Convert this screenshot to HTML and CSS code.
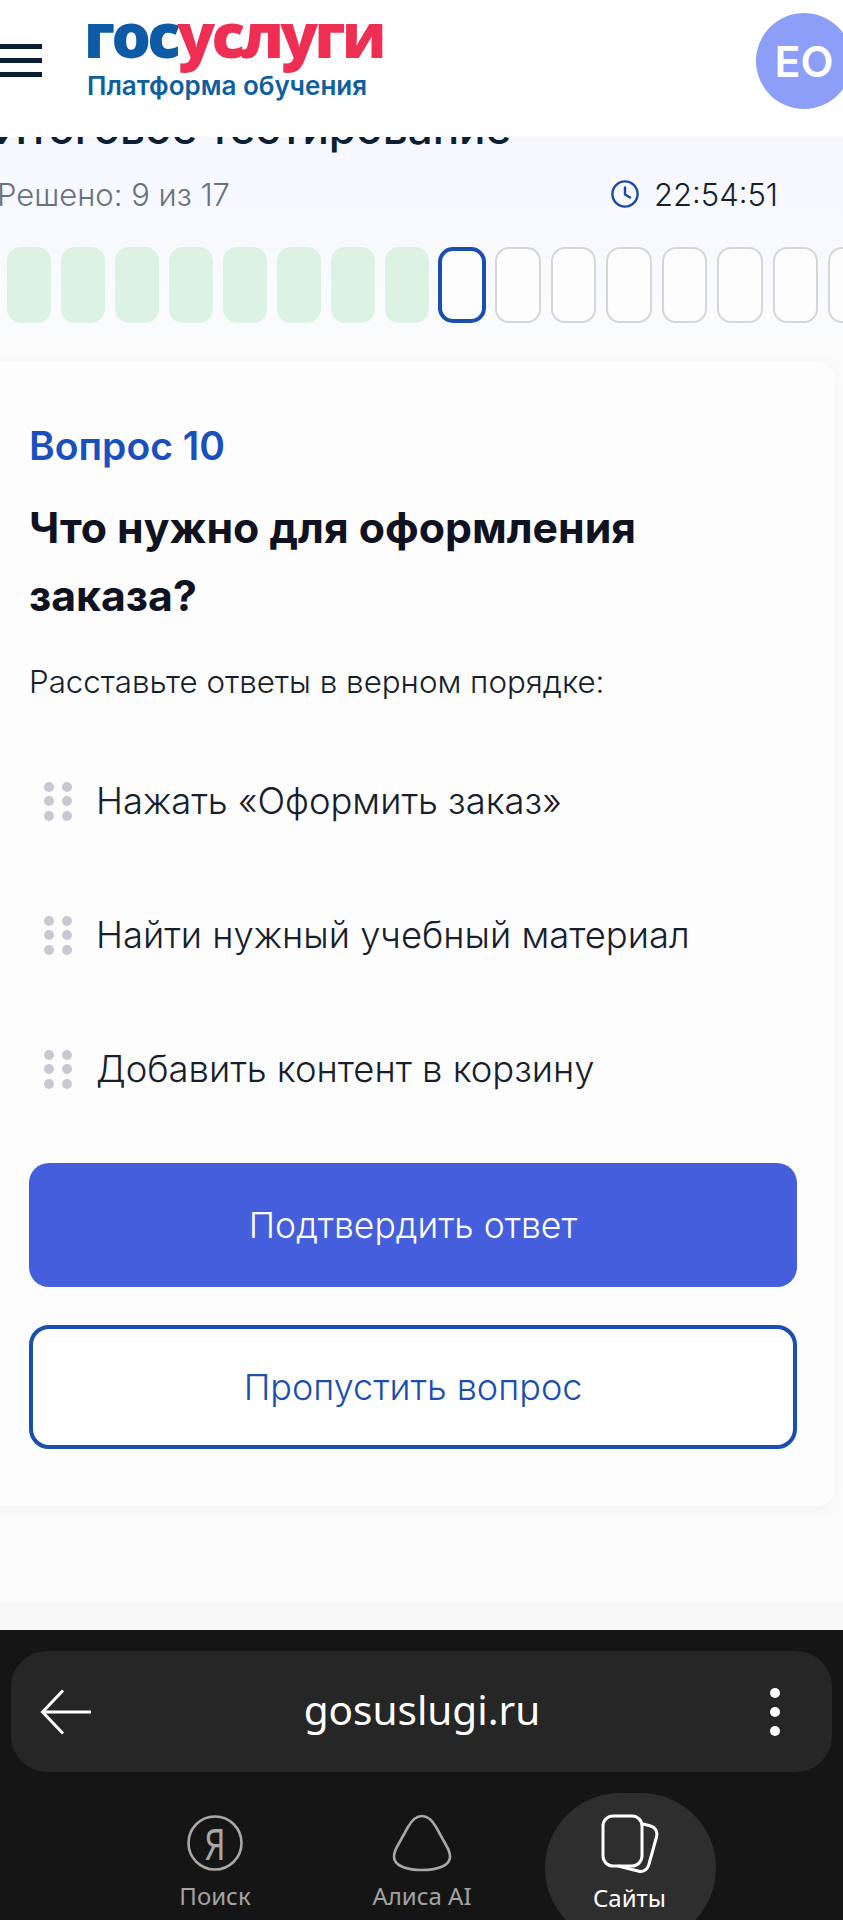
FILE: index.html
```html
<!DOCTYPE html>
<html lang="ru">
<head>
  <meta charset="UTF-8" />
  <title>Итоговое тестирование</title>
  <link rel="stylesheet" href="styles.css">
</head>
<body>

  <div class="page">
    <header class="header">
      <div class="burger"><span></span><span></span><span></span></div>
      <div class="logo">
        <div class="logo-name"><span class="logo-blue">гос</span><span class="logo-red">услуги</span></div>
        <div class="logo-sub">Платформа обучения</div>
      </div>
      <div class="avatar">ЕО</div>
    </header>

    <main class="content">
      <div class="test-title">Итоговое тестирование</div>

      <div class="status">
        <div class="solved">Решено: 9 из 17</div>
        <div class="timer">
          <svg width="30" height="30" viewBox="0 0 30 30" fill="none" stroke="#1a4ba8" stroke-width="2.4">
            <circle cx="15" cy="15" r="12.6"/>
            <path d="M15 8.5v7l5 3" stroke-linecap="round" stroke-linejoin="round"/>
          </svg>
          <span>22:54:51</span>
        </div>
      </div>

      <div class="steps">
        <span class="step done"></span>
        <span class="step done"></span>
        <span class="step done"></span>
        <span class="step done"></span>
        <span class="step done"></span>
        <span class="step done"></span>
        <span class="step done"></span>
        <span class="step done"></span>
        <span class="step current"></span>
        <span class="step"></span>
        <span class="step"></span>
        <span class="step"></span>
        <span class="step"></span>
        <span class="step"></span>
        <span class="step"></span>
        <span class="step"></span>
        <span class="step"></span>
      </div>

      <section class="card">
        <div class="question-num">Вопрос 10</div>
        <h2 class="question">Что нужно для оформления заказа?</h2>
        <p class="hint">Расставьте ответы в верном порядке:</p>

        <ul class="answers">
          <li class="answer">
            <span class="grip"><i></i><i></i><i></i><i></i><i></i><i></i></span>
            Нажать «Оформить заказ»
          </li>
          <li class="answer">
            <span class="grip"><i></i><i></i><i></i><i></i><i></i><i></i></span>
            Найти нужный учебный материал
          </li>
          <li class="answer">
            <span class="grip"><i></i><i></i><i></i><i></i><i></i><i></i></span>
            Добавить контент в корзину
          </li>
        </ul>

        <button class="btn btn-primary">Подтвердить ответ</button>
        <button class="btn btn-outline">Пропустить вопрос</button>
      </section>
    </main>

    <div class="page-end"></div>
  </div>

  <div class="browser">
    <div class="address-bar">
      <svg class="back" width="52" height="46" viewBox="0 0 52 46" fill="none" stroke="#fff" stroke-width="3">
        <path d="M51 23H3M23 1.500 2.500 23 23 44.500"/>
      </svg>
      <div class="url">gosuslugi.ru</div>
      <div class="dots"><i></i><i></i><i></i></div>
    </div>

    <nav class="tabs">
      <div class="tab">
        <svg width="58" height="58" viewBox="0 0 58 58" fill="none" stroke="#a8a8a8" stroke-width="2.600">
          <circle cx="29" cy="29" r="26.500"/>
        </svg>
        <span class="ya">Я</span>
        <span class="tab-label">Поиск</span>
      </div>
      <div class="tab">
        <svg width="60" height="58" viewBox="0 0 60 58" fill="none" stroke="#a8a8a8" stroke-width="2.600">
          <path d="M30 2C36 2 40 6 44 13L54 31C57 36 58 39 58 43 58 51 47 56 30 56 13 56 2 51 2 43 2 39 3 36 6 31L16 13C20 6 24 2 30 2Z"/>
        </svg>
        <span class="tab-label">Алиса AI</span>
      </div>
      <div class="tab active">
        <svg width="58" height="60" viewBox="0 0 58 60" fill="none" stroke="#fff" stroke-width="3">
          <rect x="2" y="2" width="39" height="50" rx="10"/>
          <path d="M40 9.500 48 11.500C54 13 57 17 55.500 23L48 50C46.500 56 42 58.500 37 57L17 52"/>
        </svg>
        <span class="tab-label">Сайты</span>
      </div>
    </nav>
  </div>

</body>
</html>
```

FILE: styles.css
```css
html,
body {
  margin: 0;
  padding: 0;
}

body {
  width: 843px;
  height: 1920px;
  overflow: hidden;
  background-color: #fafafa;
  font-family: Inter, "Noto Sans", sans-serif;
  color: #0b1f33;
}

.page {
  height: 1630px;
  overflow: hidden;
  background-color: #fbfbfb;
  display: flex;
  flex-direction: column;
}

.header {
  position: relative;
  z-index: 2;
  flex: none;
  height: 137px;
  background-color: #fff;
  display: flex;
  align-items: flex-start;
}

.burger {
  width: 42px;
  margin-top: 44px;
  display: flex;
  flex-direction: column;
  gap: 9px;
}

.burger span {
  height: 5px;
  background-color: #0b1f33;
}

.logo {
  margin-left: 42px;
  margin-top: -1px;
}

.logo-name {
  font-family: "Open Sans", sans-serif;
  font-size: 62px;
  font-weight: 800;
  line-height: 70px;
  letter-spacing: -3.600px;
  white-space: nowrap;
}

.logo-blue {
  color: #0d5aa7;
}

.logo-red {
  color: #ee2f53;
}

.logo-sub {
  margin-top: 2px;
  margin-left: 3px;
  font-size: 26px;
  font-weight: 600;
  line-height: 30px;
  white-space: nowrap;
  color: #0f5f9f;
}

.avatar {
  margin-left: auto;
  margin-top: 13px;
  margin-right: -9px;
  width: 96px;
  height: 96px;
  border-radius: 50%;
  background-color: #8c9ef8;
  color: #fff;
  font-size: 43px;
  font-weight: 600;
  display: flex;
  align-items: center;
  justify-content: center;
}

.content {
  flex: none;
  background: linear-gradient(#f7f8fd, #f9fafe 150px, #fcfcfc 230px);
}

.test-title {
  margin-top: -34px;
  margin-left: -6px;
  font-size: 44px;
  font-weight: 500;
  line-height: 50px;
  white-space: nowrap;
}

.status {
  margin-top: 21px;
  display: flex;
  justify-content: space-between;
  align-items: center;
  margin-left: -3px;
  padding-right: 65px;
  height: 40px;
}

.solved {
  font-size: 31px;
  font-weight: 300;
  color: #66727f;
}

.timer {
  display: flex;
  align-items: center;
  gap: 14px;
  font-size: 31px;
  font-weight: 300;
  color: #16202c;
}

.steps {
  margin-top: 33px;
  margin-left: 7px;
  display: flex;
  gap: 10px;
  align-items: stretch;
  height: 76px;
  width: 900px;
}

.step {
  flex: none;
  box-sizing: border-box;
  width: 45.5px;
  border: 2px solid #d6d6d6;
  border-radius: 14px;
  background-color: #fdfdfe;
}

.step.done {
  width: 44px;
  border: none;
  background-color: #dcf3e4;
}

.step.current {
  width: 48px;
  margin-left: -1px;
  margin-right: -1px;
  border: 4px solid #1a4fb0;
  border-radius: 15px;
}

.card {
  margin-top: 38px;
  margin-left: -16px;
  width: 851px;
  height: 1145px;
  box-sizing: border-box;
  padding: 62px 36px 0 45px;
  background-color: #fdfdfd;
  border-radius: 18px;
  box-shadow: 0 2px 18px rgba(60, 70, 90, 0.05);
}

.question-num {
  font-size: 39px;
  font-weight: 600;
  line-height: 46px;
  color: #1a50bd;
}

.question {
  margin: 25px 0 0;
  font-size: 42.800px;
  font-weight: 700;
  line-height: 68px;
  color: #0f1221;
}

.hint {
  margin: 30px 0 0;
  font-size: 31.300px;
  font-weight: 300;
  line-height: 44px;
  color: #16202c;
}

.answers {
  list-style: none;
  margin: 30px 0 0;
  padding: 0;
}

.answer {
  height: 134px;
  display: flex;
  align-items: center;
  gap: 24px;
  font-size: 36.400px;
  font-weight: 300;
  color: #16202c;
}

.grip {
  margin-left: 15px;
  width: 28px;
  display: grid;
  grid-template-columns: 10px 10px;
  gap: 4.500px 8px;
}

.grip i {
  width: 10px;
  height: 10px;
  border-radius: 50%;
  background-color: #c8c8d2;
}

.btn {
  display: block;
  box-sizing: border-box;
  width: 768px;
  height: 124px;
  border-radius: 20px;
  font-family: Inter, sans-serif;
  font-size: 36px;
  font-weight: 300;
  cursor: pointer;
}

.btn-primary {
  margin-top: 27px;
  border: none;
  background-color: #455fdc;
  color: #fff;
  font-size: 35.500px;
}

.btn-outline {
  margin-top: 38px;
  border: 4px solid #1a4fb0;
  background-color: #fff;
  color: #1a4fb0;
}

.page-end {
  flex: 1;
  margin-top: 96px;
  background-color: #f8f8f8;
}

.browser {
  height: 290px;
  box-sizing: border-box;
  padding-top: 21px;
  background-color: #151515;
  overflow: hidden;
}

.address-bar {
  margin: 0 11px;
  height: 121px;
  box-sizing: border-box;
  padding: 0 52px 0 29px;
  border-radius: 36px;
  background-color: #262626;
  display: flex;
  align-items: center;
  justify-content: space-between;
}

.back {
  flex: none;
}

.url {
  margin-right: 18px;
  margin-bottom: 5px;
  font-family: "Noto Sans", sans-serif;
  font-size: 40.500px;
  color: #fff;
}

.dots {
  display: flex;
  flex-direction: column;
  gap: 9px;
}

.dots i {
  width: 10px;
  height: 10px;
  border-radius: 50%;
  background-color: #fff;
}

.tabs {
  position: relative;
  height: 148px;
}

.tab {
  position: absolute;
  top: 42px;
  width: 160px;
  display: flex;
  flex-direction: column;
  align-items: center;
  color: #a3a3a3;
}

.tab:nth-child(1) {
  left: 135px;
}

.tab:nth-child(2) {
  left: 342px;
}

.tab.active {
  left: 549.500px;
  color: #fff;
}

.tab.active::before {
  content: "";
  position: absolute;
  z-index: 0;
  top: -21px;
  left: -5px;
  width: 171px;
  height: 150px;
  border-radius: 80px;
  background-color: #2e2e2e;
}

.tab svg {
  position: relative;
  flex: none;
}

.ya {
  position: absolute;
  top: 7px;
  left: 0;
  width: 100%;
  text-align: center;
  font-family: "Noto Sans", sans-serif;
  font-size: 44px;
  line-height: 44px;
  color: #a8a8a8;
  transform: scaleX(0.75);
}

.tab-label {
  position: relative;
  margin-top: 10px;
  font-family: "Noto Sans", sans-serif;
  font-size: 24px;
  line-height: 28px;
  white-space: nowrap;
}
```
